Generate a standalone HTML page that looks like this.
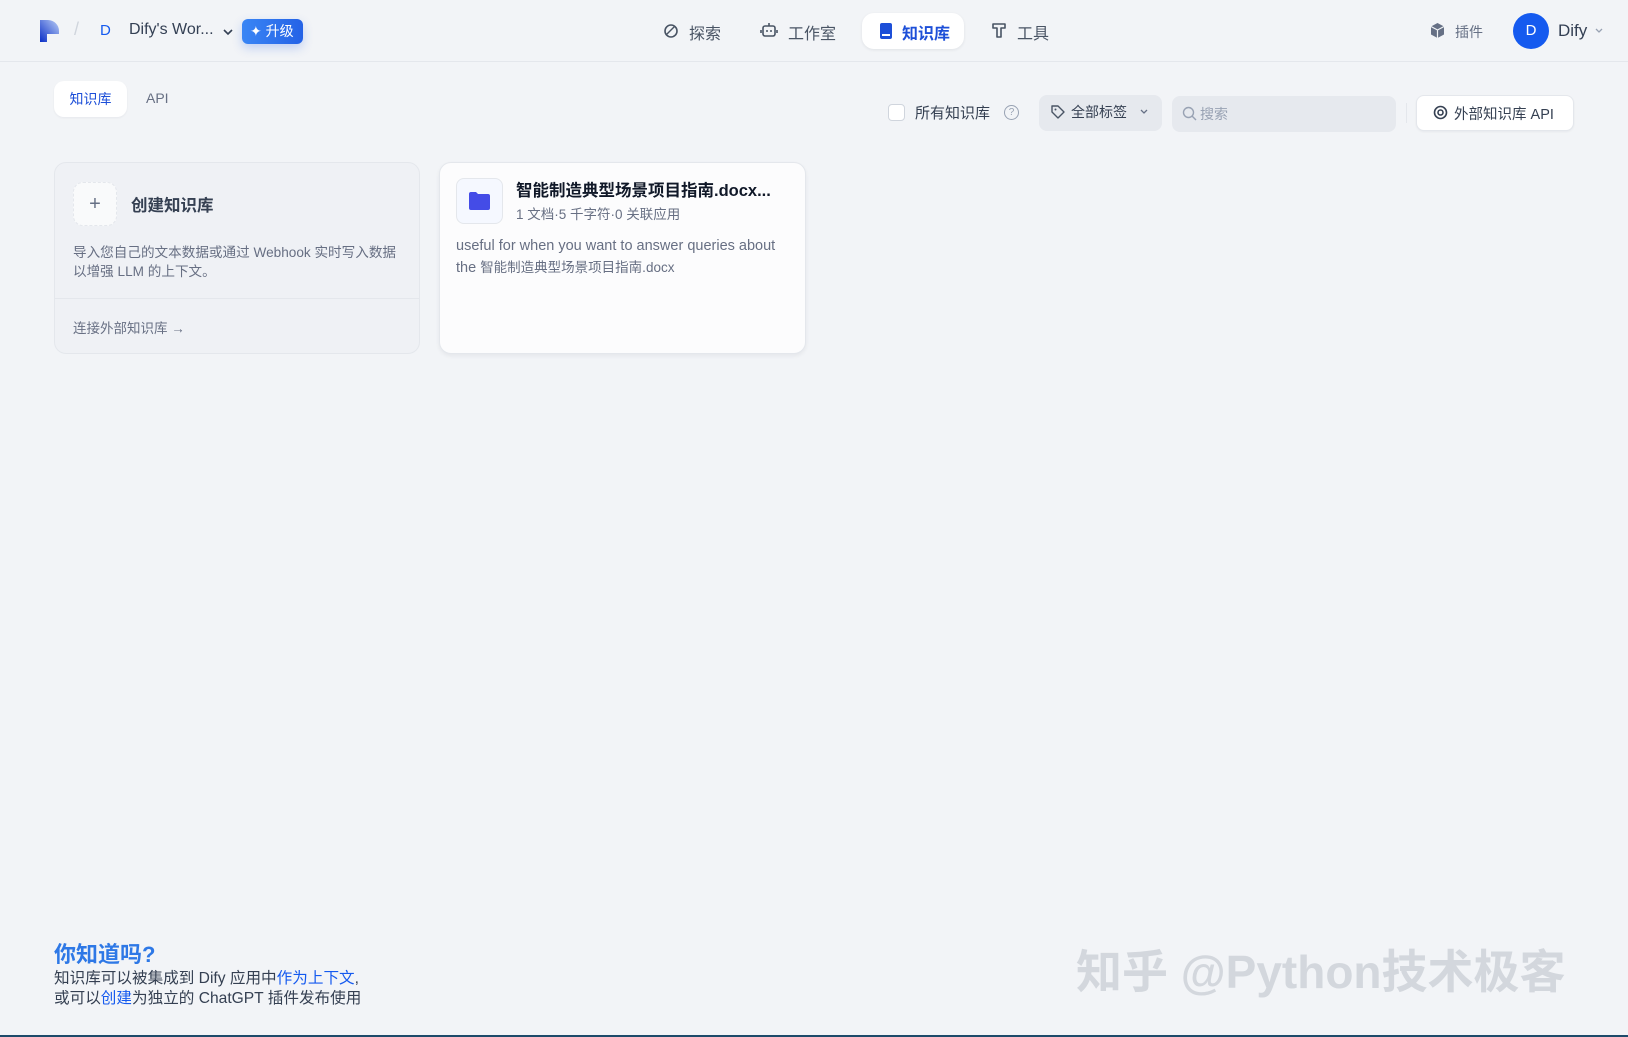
<!DOCTYPE html>
<html><head><meta charset="utf-8">
<style>
*{margin:0;padding:0;box-sizing:border-box}
body{width:1628px;height:1037px;background:#f2f4f7;font-family:"Liberation Sans","Noto Sans CJK SC",sans-serif;color:#354052;position:relative;overflow:hidden}
.a{position:absolute;white-space:nowrap}
.hdr{position:absolute;left:0;top:0;width:1628px;height:62px;border-bottom:1px solid #e4e7ec}
.card{position:absolute;border-radius:12px;border:1px solid #e4e7ec}
svg{display:block}
</style></head><body>
<div class="hdr"></div>
<div class="a" style="left:40px;top:20px;width:20px;height:22px;">
<svg width="20" height="22" viewBox="0 0 20 22"><defs><linearGradient id="g" x1="0" y1="1" x2="1" y2="0"><stop offset="0" stop-color="#0b2fc7"/><stop offset="1" stop-color="#b9cdf5"/></linearGradient></defs><path d="M0 0H8A11 11 0 0 1 19 11V14H7V22H0Z" fill="url(#g)"/></svg></div>
<div class="a" style="left:74px;top:19px;color:#d0d5dd;font-size:18px">/</div>
<div class="a" style="left:100px;top:22px;color:#155aef;font-size:15px">D</div>
<div class="a" style="left:129px;top:21px;font-size:16px;color:#344054">Dify's Wor...</div>
<svg class="a" style="left:222px;top:27px" width="12" height="10" viewBox="0 0 12 10"><path d="M2 3l4 4 4-4" stroke="#344054" stroke-width="1.6" fill="none"/></svg>
<div class="a" style="left:242px;top:19px;width:61px;height:25px;border-radius:6px;background:linear-gradient(90deg,#3a86f5,#2462e6);color:#fff;font-size:14px;line-height:25px;padding-left:8px;box-shadow:0 4px 10px rgba(40,100,230,.25)">✦ 升级</div>

<svg class="a" style="left:663px;top:23px" width="16" height="16" viewBox="0 0 16 16"><circle cx="8" cy="8" r="6" stroke="#495464" stroke-width="1.6" fill="none"/><path d="M3 12L12 3" stroke="#495464" stroke-width="1.4"/></svg>
<div class="a" style="left:689px;top:20px;font-size:16px;color:#495464">探索</div>
<svg class="a" style="left:760px;top:22px" width="18" height="17" viewBox="0 0 18 17"><rect x="3" y="4" width="12" height="10" rx="2" stroke="#495464" stroke-width="1.6" fill="none"/><path d="M9 1v3M1 8v3M17 8v3" stroke="#495464" stroke-width="1.6"/><circle cx="7" cy="9" r="1" fill="#495464"/><circle cx="11" cy="9" r="1" fill="#495464"/></svg>
<div class="a" style="left:788px;top:20px;font-size:16px;color:#495464">工作室</div>
<div class="a" style="left:862px;top:13px;width:102px;height:36px;border-radius:12px;background:#fff;box-shadow:0 1px 3px rgba(16,24,40,.08)"></div>
<svg class="a" style="left:879px;top:23px" width="14" height="16" viewBox="0 0 14 16"><rect x="1" y="0" width="12" height="16" rx="2" fill="#1d4fd8"/><rect x="3" y="11" width="8" height="2" fill="#fff"/></svg>
<div class="a" style="left:902px;top:20px;font-size:16px;color:#1d4fd8;font-weight:bold">知识库</div>
<svg class="a" style="left:991px;top:22px" width="16" height="17" viewBox="0 0 16 17"><path d="M2 2h12v4H10v9H6V6H2z" stroke="#495464" stroke-width="1.6" fill="none" stroke-linejoin="round"/></svg>
<div class="a" style="left:1017px;top:20px;font-size:16px;color:#495464">工具</div>

<svg class="a" style="left:1429px;top:22px" width="17" height="17" viewBox="0 0 17 17"><path d="M8.5 1L15 4.5v8L8.5 16 2 12.5v-8z" fill="#667085"/><path d="M2 4.5l6.5 3.5 6.5-3.5M8.5 8v8" stroke="#f2f4f7" stroke-width="1.2" fill="none"/></svg>
<div class="a" style="left:1455px;top:22px;font-size:14px;color:#667085">插件</div>
<div class="a" style="left:1513px;top:13px;width:36px;height:36px;border-radius:50%;background:#155aef;color:#fff;text-align:center;line-height:36px;font-size:15px">D</div>
<div class="a" style="left:1558px;top:21px;font-size:17px;color:#344054">Dify</div>
<svg class="a" style="left:1594px;top:27px" width="10" height="8" viewBox="0 0 10 8"><path d="M2 2l3 3 3-3" stroke="#98a2b3" stroke-width="1.3" fill="none"/></svg>

<div class="a" style="left:54px;top:81px;width:73px;height:36px;border-radius:10px;background:#fff;box-shadow:0 1px 2px rgba(16,24,40,.05);color:#1d4fd8;font-size:14px;text-align:center;line-height:36px">知识库</div>
<div class="a" style="left:146px;top:90px;font-size:14px;color:#676f83">API</div>

<div class="a" style="left:888px;top:104px;width:17px;height:17px;border:1px solid #d0d5dd;border-radius:4px;background:#fff"></div>
<div class="a" style="left:915px;top:102px;font-size:15px;color:#354052">所有知识库</div>
<div class="a" style="left:1004px;top:105px;width:15px;height:15px;border:1px solid #98a2b3;border-radius:50%;font-size:10px;line-height:13px;text-align:center;color:#98a2b3">?</div>
<div class="a" style="left:1039px;top:95px;width:123px;height:36px;border-radius:8px;background:#e6e9ee"></div>
<svg class="a" style="left:1050px;top:104px" width="16" height="16" viewBox="0 0 16 16"><path d="M2 2h6l6 6-6 6-6-6z" stroke="#495464" stroke-width="1.4" fill="none" stroke-linejoin="round"/><circle cx="5.5" cy="5.5" r="1" fill="#495464"/></svg>
<div class="a" style="left:1071px;top:102px;font-size:14px;color:#354052">全部标签</div>
<svg class="a" style="left:1139px;top:108px" width="10" height="8" viewBox="0 0 10 8"><path d="M2 2l3 3 3-3" stroke="#667085" stroke-width="1.3" fill="none"/></svg>
<div class="a" style="left:1172px;top:96px;width:224px;height:36px;border-radius:8px;background:#e6e9ee"></div>
<svg class="a" style="left:1182px;top:106px" width="15" height="15" viewBox="0 0 15 15"><circle cx="6.5" cy="6.5" r="5" stroke="#98a2b3" stroke-width="1.4" fill="none"/><path d="M10 10l4 4" stroke="#98a2b3" stroke-width="1.4"/></svg>
<div class="a" style="left:1200px;top:104px;font-size:14px;color:#98a2b3">搜索</div>
<div class="a" style="left:1406px;top:103px;width:1px;height:20px;background:#e4e7ec"></div>
<div class="a" style="left:1416px;top:95px;width:158px;height:36px;border-radius:8px;background:#fff;border:1px solid #e4e7ec;box-shadow:0 1px 2px rgba(16,24,40,.05)"></div>
<svg class="a" style="left:1433px;top:105px" width="15" height="15" viewBox="0 0 15 15"><circle cx="7.5" cy="7.5" r="6" stroke="#354052" stroke-width="1.6" fill="none"/><circle cx="7.5" cy="7.5" r="2.5" stroke="#354052" stroke-width="1.6" fill="none"/></svg>
<div class="a" style="left:1454px;top:103px;font-size:14.5px;color:#354052">外部知识库 API</div>

<div class="card" style="left:54px;top:162px;width:366px;height:192px;background:#eff1f5"></div>
<div class="a" style="left:73px;top:182px;width:44px;height:44px;border-radius:10px;background:#f9fafb;border:1px dashed #e4e7ec;text-align:center;line-height:42px;font-size:20px;color:#667085">+</div>
<div class="a" style="left:131px;top:192px;font-size:16.5px;font-weight:bold;color:#354052">创建知识库</div>
<div class="a" style="left:73px;top:243px;font-size:13.6px;line-height:19px;color:#676f83">导入您自己的文本数据或通过 Webhook 实时写入数据<br>以增强 LLM 的上下文。</div>
<div class="a" style="left:55px;top:298px;width:364px;height:1px;background:#e4e7ec"></div>
<div class="a" style="left:73px;top:317px;font-size:13.5px;color:#676f83">连接外部知识库 →</div>

<div class="card" style="left:439px;top:162px;width:367px;height:192px;background:#fcfcfd;box-shadow:0 2px 4px rgba(16,24,40,.06)"></div>
<div class="a" style="left:456px;top:178px;width:47px;height:46px;border-radius:8px;background:#f5f8ff;border:1px solid #e4e7ec"></div>
<svg class="a" style="left:469px;top:191px" width="21" height="20" viewBox="0 0 21 20"><path d="M0 3a2 2 0 0 1 2-2h5l2 2h10a2 2 0 0 1 2 2v12a2 2 0 0 1-2 2H2a2 2 0 0 1-2-2z" fill="#444ce7"/></svg>
<div class="a" style="left:516px;top:177px;font-size:16.5px;font-weight:bold;color:#101828">智能制造典型场景项目指南.docx...</div>
<div class="a" style="left:516px;top:203px;font-size:13.5px;color:#676f83">1 文档·5 千字符·0 关联应用</div>
<div class="a" style="left:456px;top:236px;font-size:14.5px;line-height:21px;color:#676f83">useful for when you want to answer queries about<br>the <span style="font-size:13.5px">智能制造典型场景项目指南.docx</span></div>

<div class="a" style="left:54px;top:937px;font-size:22px;font-weight:bold;color:#2e78e6">你知道吗?</div>
<div class="a" style="left:54px;top:969px;font-size:15.6px;line-height:20px;color:#354052">知识库可以被集成到 Dify 应用中<span style="color:#155aef">作为上下文</span>,<br>或可以<span style="color:#155aef">创建</span>为独立的 ChatGPT 插件发布使用</div>
<div class="a" style="left:1076px;top:936px;font-size:46px;color:rgba(200,205,212,.75);font-weight:bold;letter-spacing:0px">知乎 @Python技术极客</div>
<div class="a" style="left:0;top:1035px;width:1628px;height:2px;background:#1d4a6a"></div>
</body></html>
